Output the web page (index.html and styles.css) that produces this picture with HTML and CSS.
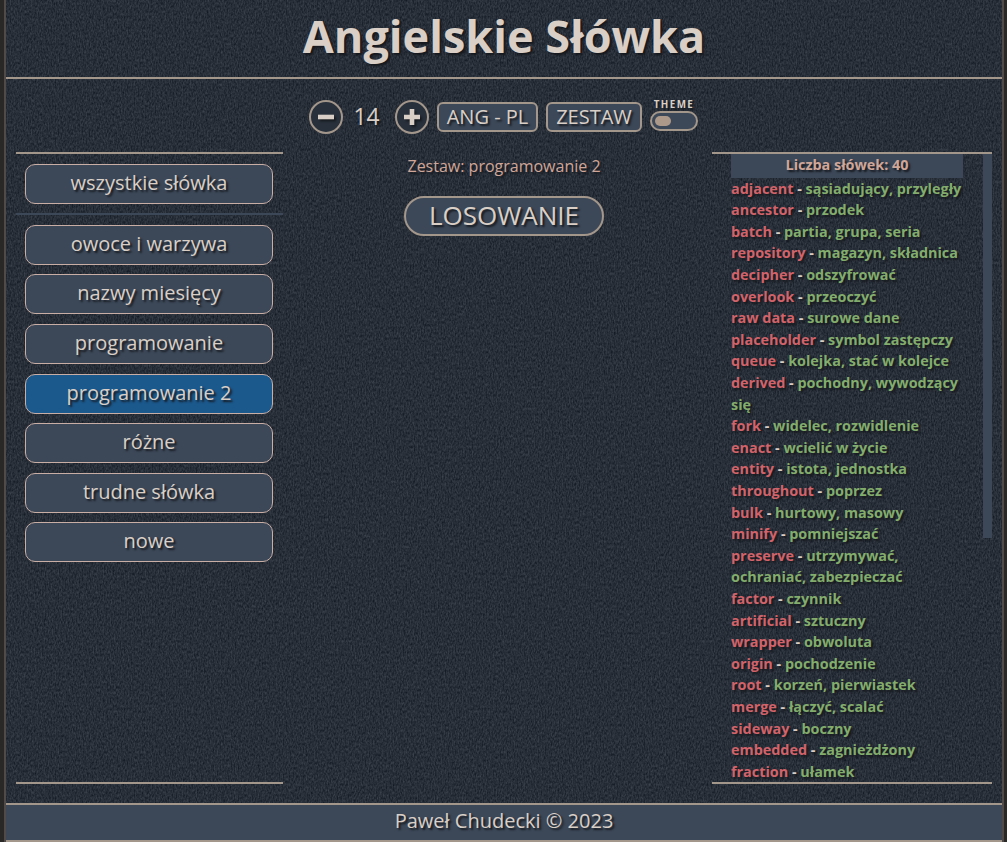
FILE: index.html
```html
<!DOCTYPE html>
<html lang="pl">
<head>
<meta charset="utf-8">
<title>Angielskie Słówka</title>
<link rel="stylesheet" href="styles.css">
</head>
<body>
<div class="page">
  <svg class="fabric" aria-hidden="true">
    <filter id="denim" x="0" y="0" width="100%" height="100%" color-interpolation-filters="sRGB">
      <feTurbulence type="fractalNoise" baseFrequency="0.71 0.37" numOctaves="2" seed="4"/>
      <feColorMatrix values="0.22 0 0 0 0.048  0.22 0 0 0 0.073  0.22 0 0 0 0.11  0 0 0 0 1"/>
    </filter>
    <rect width="100%" height="100%" filter="url(#denim)"/>
  </svg>
  <header class="header"><h1 class="title">Angielskie Słówka</h1></header>
  <nav class="toolbar">
    <button class="round"><svg viewBox="0 0 30 30"><path d="M7 15H23"/></svg></button>
    <span class="size">14</span>
    <button class="round"><svg viewBox="0 0 30 30"><path d="M7 15H23M15 7V23"/></svg></button>
    <button class="tool lang">ANG - PL</button>
    <button class="tool set">ZESTAW</button>
    <div class="theme"><span class="theme-label">THEME</span><span class="switch"><i class="knob"></i></span></div>
  </nav>
  <main class="main">
    <aside class="sets">
      <div class="all"><button class="item">wszystkie słówka</button></div>
      <div class="list">
        <button class="item">owoce i warzywa</button>
        <button class="item">nazwy miesięcy</button>
        <button class="item">programowanie</button>
        <button class="item active">programowanie 2</button>
        <button class="item">różne</button>
        <button class="item">trudne słówka</button>
        <button class="item">nowe</button>
      </div>
    </aside>
    <section class="center">
      <p class="current">Zestaw: programowanie 2</p>
      <button class="draw">LOSOWANIE</button>
    </section>
    <aside class="words">
      <div class="words-body">
        <div class="count">Liczba słówek: 40</div>
        <p><b>adjacent</b> - <em>sąsiadujący, przyległy</em></p>
        <p><b>ancestor</b> - <em>przodek</em></p>
        <p><b>batch</b> - <em>partia, grupa, seria</em></p>
        <p><b>repository</b> - <em>magazyn, składnica</em></p>
        <p><b>decipher</b> - <em>odszyfrować</em></p>
        <p><b>overlook</b> - <em>przeoczyć</em></p>
        <p><b>raw data</b> - <em>surowe dane</em></p>
        <p><b>placeholder</b> - <em>symbol zastępczy</em></p>
        <p><b>queue</b> - <em>kolejka, stać w kolejce</em></p>
        <p><b>derived</b> - <em>pochodny, wywodzący się</em></p>
        <p><b>fork</b> - <em>widelec, rozwidlenie</em></p>
        <p><b>enact</b> - <em>wcielić w życie</em></p>
        <p><b>entity</b> - <em>istota, jednostka</em></p>
        <p><b>throughout</b> - <em>poprzez</em></p>
        <p><b>bulk</b> - <em>hurtowy, masowy</em></p>
        <p><b>minify</b> - <em>pomniejszać</em></p>
        <p><b>preserve</b> - <em>utrzymywać, ochraniać, zabezpieczać</em></p>
        <p><b>factor</b> - <em>czynnik</em></p>
        <p><b>artificial</b> - <em>sztuczny</em></p>
        <p><b>wrapper</b> - <em>obwoluta</em></p>
        <p><b>origin</b> - <em>pochodzenie</em></p>
        <p><b>root</b> - <em>korzeń, pierwiastek</em></p>
        <p><b>merge</b> - <em>łączyć, scalać</em></p>
        <p><b>sideway</b> - <em>boczny</em></p>
        <p><b>embedded</b> - <em>zagnieżdżony</em></p>
        <p><b>fraction</b> - <em>ułamek</em></p>
      </div>
      <div class="thumb"></div>
    </aside>
  </main>
  <footer class="footer">Paweł Chudecki © 2023</footer>
</div>
</body>
</html>
```
FILE: styles.css
```css
* { box-sizing: border-box; margin: 0; padding: 0; }
body {
  height: 842px;
  overflow: hidden;
  background: #2a2827;
  font-family: "Open Sans", "Noto Sans", sans-serif;
  color: #d9cfc7;
  text-shadow: 2px 2px 2px #16191e;
}
button {
  font: inherit;
  color: inherit;
  text-shadow: inherit;
  background: #3c4858;
  text-align: center;
}
.page {
  position: relative;
  display: flex;
  flex-direction: column;
  width: 1000px;
  height: 842px;
  margin-left: 4px;
  border: solid #504b48;
  border-width: 0 2px;
}
.fabric { position: absolute; inset: 0; width: 100%; height: 100%; z-index: -1; }
.header { height: 79px; border-bottom: 2px solid #a3968b; text-align: center; }
.title { font-size: 45px; font-weight: 700; line-height: 72px; }
.toolbar { display: flex; align-items: center; height: 73px; padding: 3px 0 0 303px; }
.round { width: 34px; height: 34px; border: 2px solid #a3968b; border-radius: 50%; background: #28303b; }
.round svg { display: block; width: 30px; height: 30px; fill: none; stroke: #d9cfc7; stroke-width: 4.6; filter: drop-shadow(2px 2px 1px #16191e); }
.size { width: 52px; padding-right: 5px; margin-top: -2px; text-align: center; font-size: 22.8px; }
.tool { height: 30px; border: 2px solid #a3968b; border-radius: 6px; font-size: 20px; line-height: 26px; white-space: nowrap; }
.lang { width: 101px; margin-left: 8px; }
.set { width: 96px; margin-left: 8px; }
.theme { display: flex; flex-direction: column; align-items: center; width: 48px; margin-left: 8px; margin-top: -5px; }
.theme-label { height: 13px; font-size: 9.8px; line-height: 13px; font-weight: 700; letter-spacing: 1.4px; white-space: nowrap; }
.switch { width: 48px; height: 20px; border: 2px solid #a3968b; border-radius: 10px; background: #3c4858; padding: 3px; }
.knob { display: block; width: 16px; height: 10px; border-radius: 5px; background: #ad998a; }
.main { display: flex; height: 632px; padding: 0 10px; }
.sets { width: 267px; border: solid #a3968b; border-width: 2px 0; }
.all { height: 61px; padding: 10px 9px 0; border-bottom: 2px solid #3c4858; }
.list { display: flex; flex-direction: column; gap: 9.6px; padding: 9.8px 9px 0; }
.item { display: block; width: 248px; height: 40px; flex: none; border: 1px solid #c8aea5; border-radius: 10px; font-size: 20px; line-height: 36px; padding-bottom: 2px; }
.active { background: #1b588c; }
.center { display: flex; flex-direction: column; align-items: center; flex: 1; padding-left: 13px; }
.current { height: 28px; line-height: 28px; font-size: 16px; color: #d0a698; }
.draw { width: 200px; height: 40px; margin-top: 16px; border: 2px solid #a3968b; border-radius: 20px; font-size: 26px; line-height: 34px; padding-bottom: 2px; }
.words { display: flex; justify-content: space-between; width: 280px; border: solid #a3968b; border-width: 2px 0; overflow: hidden; font-size: 14.4px; font-weight: 700; line-height: 21.6px; }
.words-body { width: 232px; margin-left: 19px; }
.words b { font-weight: 700; color: #d3636a; }
.words em { font-style: normal; color: #83ad6c; }
.count { height: 23.7px; background: #3c4858; color: #d0a698; text-align: center; }
.thumb { width: 9px; height: 384px; background: #3c4858; }
.footer { height: 39px; margin-top: 19px; border: solid #a3968b; border-width: 2px 0; background: #3c4858; text-align: center; font-size: 20px; line-height: 32px; }
```
